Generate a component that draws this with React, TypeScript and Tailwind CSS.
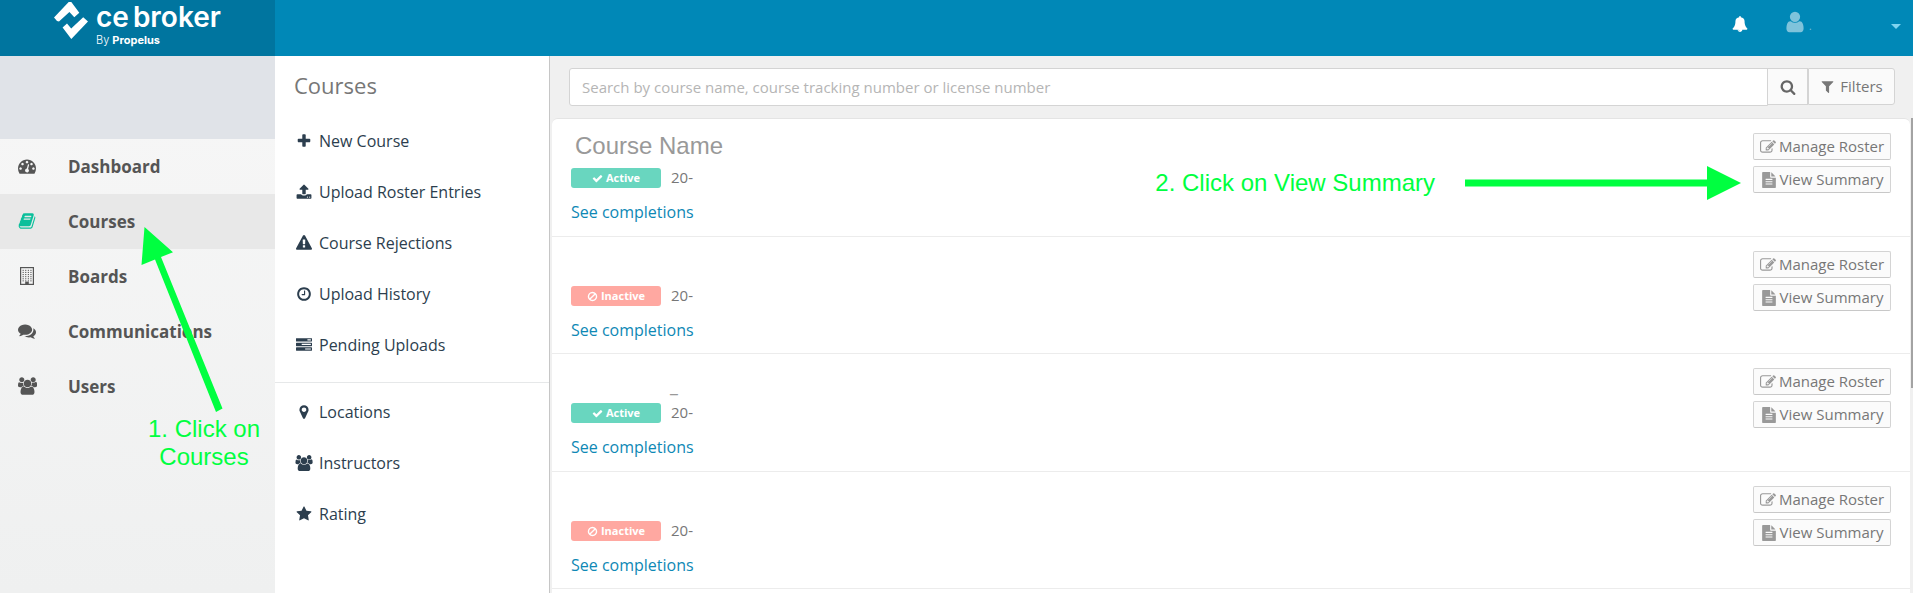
import type { ReactNode } from "react";

const paths = {
  tachometer:
    "M384 1152q0-53-37.5-90.5t-90.5-37.5-90.5 37.5-37.5 90.5 37.5 90.5 90.5 37.5 90.5-37.5 37.5-90.5zm192-448q0-53-37.5-90.5t-90.5-37.5-90.5 37.5-37.5 90.5 37.5 90.5 90.5 37.5 90.5-37.5 37.5-90.5zm428 481l101-382q6-26-7.5-48.5t-38.5-29.5-48 6.5-30 39.5l-101 382q-60 5-107 43.5t-63 98.5q-20 77 20 146t117 89 146-20 89-117q16-60-6-117t-72-91zm660-33q0-53-37.5-90.5t-90.5-37.5-90.5 37.5-37.5 90.5 37.5 90.5 90.5 37.5 90.5-37.5 37.5-90.5zm-640-640q0-53-37.5-90.5t-90.5-37.5-90.5 37.5-37.5 90.5 37.5 90.5 90.5 37.5 90.5-37.5 37.5-90.5zm448 192q0-53-37.5-90.5t-90.5-37.5-90.5 37.5-37.5 90.5 37.5 90.5 90.5 37.5 90.5-37.5 37.5-90.5zm320 448q0 261-141 483-19 29-54 29h-1402q-35 0-54-29-141-221-141-483 0-182 71-348t191-286 286-191 348-71 348 71 286 191 191 286 71 348z",
  book: "M1703 478q40 57 18 129l-275 906q-19 64-76.5 107.5t-122.5 43.5h-923q-77 0-148.5-53.5t-99.5-131.5q-24-67-2-127 0-4 3-27t4-37q1-8-3-21.5t-3-19.5q2-11 8-21t16.5-23.5 16.5-23.5q23-38 45-91.5t30-91.5q3-10 .5-30t-.5-28q3-11 17-28t17-23q21-36 42-92t25-90q1-9-2.5-32t.5-28q4-13 22-30.5t22-22.5q19-26 42.5-84.5t27.5-96.5q1-8-3-25.5t-2-26.5q2-8 9-18t18-23 17-21q8-12 16.5-30.5t15-35 16-36 19.5-32 26.5-23.5 36-11.5 47.5 5.5l-1 3q38-9 51-9h761q74 0 114 56t18 130l-274 906q-36 119-71.5 153.5t-128.5 34.5h-869q-27 0-38 15-11 16-1 43 24 70 144 70h923q29 0 56-15.5t35-41.5l300-987q7-22 5-57 38 15 59 43zm-1064 2q-4 13 2 22.5t20 9.5h608q13 0 25.5-9.5t16.5-22.5l21-64q4-13-2-22.5t-20-9.5h-608q-13 0-25.5 9.5t-16.5 22.5zm-83 256q-4 13 2 22.5t20 9.5h608q13 0 25.5-9.5t16.5-22.5l21-64q4-13-2-22.5t-20-9.5h-608q-13 0-25.5 9.5t-16.5 22.5z",
  comments:
    "M1408 768q0 139-94 257t-256.5 186.5-353.5 68.5q-86 0-176-16-124 88-278 128-36 9-86 16h-3q-11 0-20.5-8t-11.5-21q-1-3-1-6.5t.5-6.5 2-6l2.5-5 3.5-5.5 4-5 4.5-5 4-4.5q5-6 23-25t26-29.5 22.5-29 25-38.5 20.5-44q-124-72-195-177t-71-224q0-139 94-257t256.5-186.5 353.5-68.5 353.5 68.5 256.5 186.5 94 257zm384 256q0 120-71 224.5t-195 176.5q10 24 20.5 44t25 38.5 22.5 29 26 29.5 23 25q1 1 4 4.5t4.5 5 4 5 3.5 5.5l2.5 5 2 6 .5 6.5-1 6.5q-3 14-13 22t-22 7q-50-7-86-16-154-40-278-128-90 16-176 16-271 0-472-132 58 4 88 4 161 0 309-45t264-129q125-92 192-212t67-254q0-77-23-152 129 71 204 178t75 230z",
  users:
    "M593 896q-162 5-265 128h-134q-82 0-138-40.5t-56-118.5q0-353 124-353 6 0 43.5 21t97.5 42.5 119 21.5q67 0 133-23-5 37-5 66 0 159 93 293zm1071 637q0 120-73 189.5t-194 69.5h-874q-121 0-194-69.5t-73-189.5q0-53 3.5-103.5t14-109 26.5-108.5 43-97.5 62-81 85.5-53.5 111.5-20q10 0 43 21.5t73 48 107 48 135 21.5 135-21.5 107-48 73-48 43-21.5q61 0 111.5 20t85.5 53.5 62 81 43 97.5 26.5 108.5 14 109 3.5 103.5zm-1024-1277q0 106-75 181t-181 75-181-75-75-181 75-181 181-75 181 75 75 181zm704 384q0 159-112.5 271.5t-271.5 112.5-271.5-112.5-112.5-271.5 112.5-271.5 271.5-112.5 271.5 112.5 112.5 271.5zm576 225q0 78-56 118.5t-138 40.5h-134q-103-123-265-128 93-134 93-293 0-29-5-66 66 23 133 23 59 0 119-21.5t97.5-42.5 43.5-21q124 0 124 353zm-128-609q0 106-75 181t-181 75-181-75-75-181 75-181 181-75 181 75 75 181z",
  plus: "M1600 736v192q0 40-28 68t-68 28h-416v416q0 40-28 68t-68 28h-192q-40 0-68-28t-28-68v-416h-416q-40 0-68-28t-28-68v-192q0-40 28-68t68-28h416v-416q0-40 28-68t68-28h192q40 0 68 28t28 68v416h416q40 0 68 28t28 68z",
  upload:
    "M1344 1472q0-26-19-45t-45-19-45 19-19 45 19 45 45 19 45-19 19-45zm256 0q0-26-19-45t-45-19-45 19-19 45 19 45 45 19 45-19 19-45zm128-224v320q0 40-28 68t-68 28h-1472q-40 0-68-28t-28-68v-320q0-40 28-68t68-28h427q21 56 70.5 92t110.5 36h256q61 0 110.5-36t70.5-92h427q40 0 68 28t28 68zm-325-648q-17 40-59 40h-256v448q0 26-19 45t-45 19h-256q-26 0-45-19t-19-45v-448h-256q-42 0-59-40-17-39 14-69l448-448q18-19 45-19t45 19l448 448q31 30 14 69z",
  warning:
    "M1024 1375v-190q0-14-9.5-23.5t-22.5-9.5h-192q-13 0-22.5 9.5t-9.5 23.5v190q0 14 9.5 23.5t22.5 9.5h192q13 0 22.5-9.5t9.5-23.5zm-2-374l18-459q0-12-10-19-13-11-24-11h-220q-11 0-24 11-10 7-10 21l17 457q0 10 10 16.5t24 6.5h185q14 0 23.5-6.5t10.5-16.5zm-14-934l768 1408q35 63-2 126-17 29-46.5 46t-63.5 17h-1536q-34 0-63.5-17t-46.5-46q-37-63-2-126l768-1408q17-31 47-49t65-18 65 18 47 49z",
  clock:
    "M1024 544v448q0 14-9 23t-23 9h-320q-14 0-23-9t-9-23v-64q0-14 9-23t23-9h224v-352q0-14 9-23t23-9h64q14 0 23 9t9 23zm416 352q0-148-73-273t-198-198-273-73-273 73-198 198-73 273 73 273 198 198 273 73 273-73 198-198 73-273zm224 0q0 209-103 385.5t-279.5 279.5-385.5 103-385.5-103-279.5-279.5-103-385.5 103-385.5 279.5-279.5 385.5-103 385.5 103 279.5 279.5 103 385.5z",
  tasks:
    "M1024 1408h640v-128h-640v128zm-384-512h1024v-128h-1024v128zm640-512h384v-128h-384v128zm512 832v256q0 26-19 45t-45 19h-1664q-26 0-45-19t-19-45v-256q0-26 19-45t45-19h1664q26 0 45 19t19 45zm0-512v256q0 26-19 45t-45 19h-1664q-26 0-45-19t-19-45v-256q0-26 19-45t45-19h1664q26 0 45 19t19 45zm0-512v256q0 26-19 45t-45 19h-1664q-26 0-45-19t-19-45v-256q0-26 19-45t45-19h1664q26 0 45 19t19 45z",
  marker:
    "M1152 640q0-106-75-181t-181-75-181 75-75 181 75 181 181 75 181-75 75-181zm256 0q0 109-33 179l-364 774q-16 33-47.5 52t-67.5 19-67.5-19-46.5-52l-365-774q-33-70-33-179 0-212 150-362t362-150 362 150 150 362z",
  star: "M1728 647q0 22-26 48l-363 354 86 500q1 7 1 20 0 21-10.5 35.5t-30.5 14.5q-19 0-40-12l-449-236-449 236q-22 12-40 12-21 0-31.5-14.5t-10.5-35.5q0-6 2-20l86-500-364-354q-25-27-25-48 0-37 56-46l502-73 225-455q19-41 49-41t49 41l225 455 502 73q56 9 56 46z",
  search:
    "M1216 832q0-185-131.5-316.5t-316.5-131.5-316.5 131.5-131.5 316.5 131.5 316.5 316.5 131.5 316.5-131.5 131.5-316.5zm512 832q0 52-38 90t-90 38q-54 0-90-38l-343-342q-179 124-399 124-143 0-273.5-55.5t-225-150-150-225-55.5-273.5 55.5-273.5 150-225 225-150 273.5-55.5 273.5 55.5 225 150 150 225 55.5 273.5q0 220-124 399l343 343q37 37 37 90z",
  filter:
    "M1595 295q17 41-14 70l-493 493v742q0 42-39 59-13 5-25 5-27 0-45-19l-256-256q-19-19-19-45v-486l-493-493q-31-29-14-70 17-39 59-39h1280q42 0 59 39z",
  edit: "M888 1184l116-116-152-152-116 116v56h96v96h56zm440-720q-16-16-33 1l-350 350q-17 17-1 33t33-1l350-350q17-17 1-33zm80 594v190q0 119-84.5 203.5t-203.5 84.5h-832q-119 0-203.5-84.5t-84.5-203.5v-832q0-119 84.5-203.5t203.5-84.5h832q63 0 117 25 15 7 18 23 3 17-9 29l-49 49q-14 14-32 8-23-6-45-6h-832q-66 0-113 47t-47 113v832q0 66 47 113t113 47h832q66 0 113-47t47-113v-126q0-13 9-22l64-64q15-15 35-7t20 29zm-96-738l288 288-672 672h-288v-288zm444 132l-92 92-288-288 92-92q28-28 68-28t68 28l152 152q28 28 28 68t-28 68z",
  file: "M1596 476q14 14 28 36h-472v-472q22 14 36 28zm-476 164h544v1056q0 40-28 68t-68 28h-1344q-40 0-68-28t-28-68v-1600q0-40 28-68t68-28h800v544q0 40 28 68t68 28zm160 736v-64q0-14-9-23t-23-9h-704q-14 0-23 9t-9 23v64q0 14 9 23t23 9h704q14 0 23-9t9-23zm0-256v-64q0-14-9-23t-23-9h-704q-14 0-23 9t-9 23v64q0 14 9 23t23 9h704q14 0 23-9t9-23zm0-256v-64q0-14-9-23t-23-9h-704q-14 0-23 9t-9 23v64q0 14 9 23t23 9h704q14 0 23-9t9-23z",
  check:
    "M1671 566q0 40-28 68l-724 724-136 136q-28 28-68 28t-68-28l-136-136-362-362q-28-28-28-68t28-68l136-136q28-28 68-28t68 28l294 295 656-657q28-28 68-28t68 28l136 136q28 28 28 68z",
  ban: "M1440 893q0-161-87-295l-754 753q137 89 297 89 111 0 211.5-43.5t173.5-116.5 116-174.5 43-212.5zm-999 299l755-754q-135-91-300-91-148 0-273 73t-198 199-73 274q0 162 89 299zm1223-299q0 157-61 300t-163.5 246-245 164-298.5 61-298.5-61-245-164-163.5-246-61-300 61-299.5 163.5-245.5 245-164 298.5-61 298.5 61 245 164 163.5 245.5 61 299.5z",
  bell: "M912 1696q0-16-16-16-59 0-101.5-42.5t-42.5-101.5q0-16-16-16t-16 16q0 73 51.5 124.5t124.5 51.5q16 0 16-16zm816-288q0 52-38 90t-90 38h-448q0 106-75 181t-181 75-181-75-75-181h-448q-52 0-90-38t-38-90q50-42 91-88t85-119.5 74.5-158.5 50-206 19.5-260q0-152 117-282.5t307-158.5q-8-19-8-39 0-40 28-68t68-28 68 28 28 68q0 20-8 39 190 28 307 158.5t117 282.5q0 139 19.5 260t50 206 74.5 158.5 85 119.5 91 88z",
  user: "M1536 1399q0 109-62.5 187t-150.5 78h-854q-88 0-150.5-78t-62.5-187q0-85 8.5-160.5t31.5-152 58.5-131 94-89 134.5-34.5q131 128 313 128t313-128q76 0 134.5 34.5t94 89 58.5 131 31.5 152 8.5 160.5zm-256-887q0 159-112.5 271.5t-271.5 112.5-271.5-112.5-112.5-271.5 112.5-271.5 271.5-112.5 271.5 112.5 112.5 271.5z",
};

type IconName = keyof typeof paths;

function Icon({ name, className }: { name: IconName; className: string }) {
  return (
    <svg
      aria-hidden="true"
      viewBox={name === "users" ? "0 0 1920 1792" : "0 0 1792 1792"}
      fill="currentColor"
      className={`shrink-0 ${className}`}
    >
      <path d={paths[name]} />
    </svg>
  );
}

function BuildingIcon() {
  const windows = [0, 1, 2, 3, 4, 5].flatMap((row) =>
    [0, 1, 2, 3].map((col) => ({ x: 2.6 + col * 2.6, y: 2.8 + row * 2.1 }))
  );
  return (
    <svg aria-hidden="true" viewBox="0 0 14 18" className="h-[18px] w-[14px]">
      <rect x="0.6" y="0.6" width="12.8" height="16.8" fill="none" stroke="currentColor" strokeWidth="1.2" />
      {windows.map((w) => (
        <rect key={`${w.x}-${w.y}`} x={w.x} y={w.y} width="1.1" height="1.1" fill="currentColor" />
      ))}
      <rect x="5.2" y="14.6" width="3.6" height="3" fill="currentColor" />
    </svg>
  );
}

const mainNav: { label: string; icon: ReactNode; active?: boolean }[] = [
  { label: "Dashboard", icon: <Icon name="tachometer" className="size-[18px]" /> },
  { label: "Courses", icon: <Icon name="book" className="size-[18px] text-[#0abf9b]" />, active: true },
  { label: "Boards", icon: <BuildingIcon /> },
  { label: "Communications", icon: <Icon name="comments" className="size-[18px]" /> },
  { label: "Users", icon: <Icon name="users" className="h-[18px] w-[19px]" /> },
];

const courseMenu: { label: string; icon: IconName }[] = [
  { label: "New Course", icon: "plus" },
  { label: "Upload Roster Entries", icon: "upload" },
  { label: "Course Rejections", icon: "warning" },
  { label: "Upload History", icon: "clock" },
  { label: "Pending Uploads", icon: "tasks" },
];

const setupMenu: { label: string; icon: IconName }[] = [
  { label: "Locations", icon: "marker" },
  { label: "Instructors", icon: "users" },
  { label: "Rating", icon: "star" },
];

const courses = [
  { id: 1, name: "Course Name", active: true },
  { id: 2, name: "", active: false },
  { id: 3, name: "", subtitle: "_", active: true },
  { id: 4, name: "", active: false },
];

function Header() {
  return (
    <header className="flex h-14 bg-[#0088b7]">
      <a href="#" className="flex w-[275px] shrink-0 bg-[#00759f] pl-[54px] text-white">
        <svg aria-hidden="true" viewBox="0 0 34 38" className="mt-px h-[38px] w-[34px]">
          <path
            d="M0 16.5 14.7 1h2.6l8 10.8-5 4.4-4.9-5.2L5 20.5 3 20zM34 20.5 17.3 38 8.6 26.6l4.4-4 4.2 5L29.2 16.2z"
            fill="currentColor"
          />
        </svg>
        <span className="ml-2 flex flex-col font-['Inter']">
          <span className="flex gap-1 text-[28px] leading-[34px] font-semibold">
            <span>ce</span>
            <span>broker</span>
          </span>
          <span className="text-[11px] leading-[13px] font-light">
            By <span className="font-bold">Propelus</span>
          </span>
        </span>
      </a>
      <div className="flex flex-1 items-start justify-end pr-3">
        <button type="button" aria-label="Notifications" className="mt-4 mr-[35px] text-white">
          <Icon name="bell" className="size-4" />
        </button>
        <button type="button" aria-label="Account" className="mt-[10px] flex items-start text-[#7fc3db]">
          <Icon name="user" className="size-6" />
          <span className="ml-[2px] w-[82px] pt-1 text-left text-[10px] leading-6">.</span>
          <svg aria-hidden="true" viewBox="0 0 10 5" className="mt-[14px] h-[5px] w-[10px] text-[#80d4f0]">
            <path d="M0 0h10L5 5z" fill="currentColor" />
          </svg>
        </button>
      </div>
    </header>
  );
}

function Sidebar() {
  return (
    <nav className="relative w-[275px] shrink-0 bg-linear-to-b from-[#f7f7f7] to-[#eff0f0]">
      <div className="h-[83px] bg-[#e0e3e8]" />
      {mainNav.map((item) => (
        <a
          key={item.label}
          href="#"
          className={`flex h-[55px] items-center font-bold text-[#555] ${item.active ? "bg-[#e8e8e8]" : ""}`}
        >
          <span className="flex w-[54px] justify-center pb-[2px]">{item.icon}</span>
          <span className="ml-[14px] pt-px text-[17px] leading-6">{item.label}</span>
        </a>
      ))}
      <svg
        aria-hidden="true"
        viewBox="0 0 84 188"
        className="absolute top-[170px] left-[140px] h-[188px] w-[84px] text-[#00ff40]"
      >
        <path d="M4.5 1 33 26.3 21 31 82.5 182.5 76 186 15 33.5 1.5 39z" fill="currentColor" />
      </svg>
      <p className="absolute top-[359px] left-[144px] w-[120px] text-center font-['Liberation_Sans'] text-2xl leading-7 text-[#00ff40]">
        1. Click on Courses
      </p>
    </nav>
  );
}

function MenuLink({ label, icon }: { label: string; icon: IconName }) {
  return (
    <a href="#" className="flex h-[51px] items-center pl-5 text-base text-[#2c3e4e]">
      <span className="mr-[6px] flex w-[18px] justify-center">
        <Icon name={icon} className={icon === "users" ? "h-4 w-[18px]" : "size-4"} />
      </span>
      {label}
    </a>
  );
}

function CoursesMenu() {
  return (
    <aside className="w-[275px] shrink-0 border-r border-[#c6c6c6] bg-white">
      <h1 className="pt-[13px] pb-[14px] pl-[19px] text-[22px] leading-8 text-[#777]">Courses</h1>
      {courseMenu.map((item) => (
        <MenuLink key={item.label} {...item} />
      ))}
      <hr className="mt-3 mb-[3px] border-[#e6e8e9]" />
      {setupMenu.map((item) => (
        <MenuLink key={item.label} {...item} />
      ))}
    </aside>
  );
}

function RowButton({ icon, label }: { icon: IconName; label: string }) {
  return (
    <button
      type="button"
      className="flex h-[27px] w-[138px] items-center justify-center gap-[3px] rounded-xs border border-[#d4d4d4] border-b-[#c8c8c8] bg-[#fbfbfb] text-[15px] text-[#777]"
    >
      <Icon name={icon} className="size-4 text-[#999]" />
      {label}
    </button>
  );
}

function CourseRow({ course }: { course: (typeof courses)[number] }) {
  return (
    <li className="relative flex h-[118px] justify-between border-b border-[#ececec] px-[19px] even:h-[117px]">
      <div>
        <h2 className="h-[49px] pt-[13px] pl-1 font-['Liberation_Sans'] text-2xl leading-7 text-[#999]">
          {course.name}
          {course.subtitle && (
            <span className="block pl-[95px] font-['Open_Sans'] text-lg leading-9 text-[#999]">{course.subtitle}</span>
          )}
        </h2>
        <div className="flex items-start gap-[10px]">
          <span
            className={`flex h-5 w-[90px] items-center justify-center gap-[3px] rounded-[3px] text-[11px] font-bold text-white ${
              course.active ? "bg-[#69d6bf]" : "bg-[#ffa8a1]"
            }`}
          >
            <Icon name={course.active ? "check" : "ban"} className="size-[11px]" />
            {course.active ? "Active" : "Inactive"}
          </span>
          <span className="text-[15px] leading-[18px] text-[#777]">20-</span>
        </div>
        <a href="#" className="mt-3 block text-base leading-6 text-[#0e88b5]">
          See completions
        </a>
      </div>
      <div className="flex flex-col gap-[6px] pt-[14px]">
        <RowButton icon="edit" label="Manage Roster" />
        <RowButton icon="file" label="View Summary" />
      </div>
      {course.id === 1 && (
        <div className="absolute top-[46px] right-[169px] flex items-center gap-[30px] text-[#00ff40]">
          <p className="font-['Liberation_Sans'] text-2xl leading-9 whitespace-nowrap">2. Click on View Summary</p>
          <svg aria-hidden="true" viewBox="0 0 276 34" className="h-[34px] w-[276px]">
            <path d="M0 13.5h242V0L276 17 242 34V20.5H0z" fill="currentColor" />
          </svg>
        </div>
      )}
    </li>
  );
}

export default function App() {
  return (
    <div className="flex min-h-screen flex-col overflow-hidden bg-white font-['Open_Sans',sans-serif]">
      <Header />
      <div className="flex flex-1">
        <Sidebar />
        <CoursesMenu />
        <main className="relative flex min-w-0 flex-1 flex-col bg-[#f0f0f0] pr-[3px] pl-[2px]">
          <form className="flex items-start py-3 pr-[15px] pl-[17px]" onSubmit={(e) => e.preventDefault()}>
            <input
              type="search"
              aria-label="Search courses"
              placeholder="Search by course name, course tracking number or license number"
              className="h-[38px] min-w-0 flex-1 rounded-l-[3px] border border-[#d4d4d4] bg-white px-3 text-[15px] text-[#555] outline-none placeholder:text-[#b5b5b5]"
            />
            <button
              type="submit"
              aria-label="Search"
              className="-ml-px flex h-[37px] w-[41px] items-center justify-center border border-[#d4d4d4] bg-[#fafafa] text-[#666]"
            >
              <Icon name="search" className="size-4" />
            </button>
            <button
              type="button"
              className="flex h-[37px] w-[87px] items-center justify-center gap-[5px] rounded-r-[3px] border border-[#d4d4d4] bg-[#fafafa] text-[15px] text-[#777]"
            >
              <Icon name="filter" className="size-[15px]" />
              Filters
            </button>
          </form>
          <ul className="flex-1 rounded-t-md border-t border-[#e4e4e4] bg-white">
            {courses.map((course) => (
              <CourseRow key={course.id} course={course} />
            ))}
          </ul>
          <div className="absolute top-[62px] right-0 h-[270px] w-[2px] bg-[#a3a3a3]" />
        </main>
      </div>
    </div>
  );
}
